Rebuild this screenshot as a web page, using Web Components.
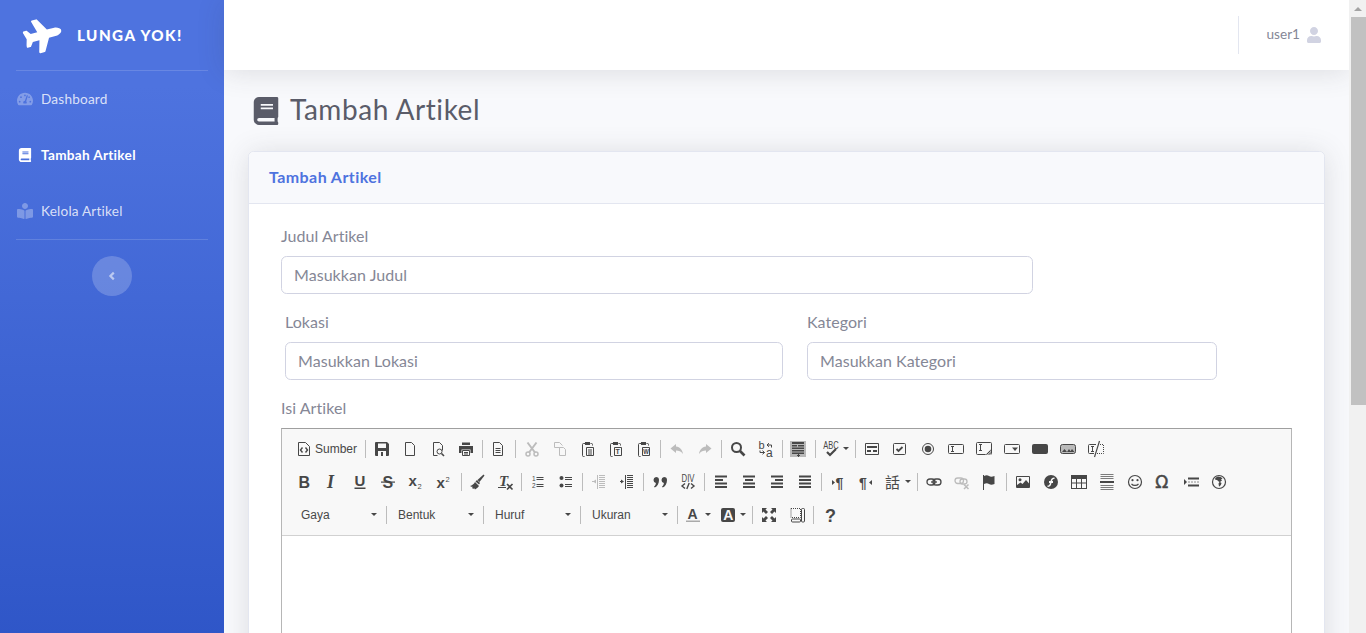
<!DOCTYPE html>
<html lang="id">
<head>
<meta charset="utf-8">
<title>Tambah Artikel</title>
<style>
  html, body { margin: 0; height: 100%; overflow: hidden; background: #f8f9fc; }
  body { font-family: Lato, "Open Sans", sans-serif; }
  #page { display: flex; height: 633px; overflow: hidden; }
  #content { flex: 1; min-width: 0; display: flex; flex-direction: column; }
</style>
</head>
<body>
<div id="page">
  <lunga-sidebar></lunga-sidebar>
  <div id="content">
    <lunga-topbar username="user1"></lunga-topbar>
    <page-body>
      <page-heading>Tambah Artikel</page-heading>
      <form-card heading="Tambah Artikel">
        <form-field label="Judul Artikel" placeholder="Masukkan Judul" style="width:752px"></form-field>
        <form-row>
          <form-field label="Lokasi" placeholder="Masukkan Lokasi"></form-field>
          <form-field label="Kategori" placeholder="Masukkan Kategori"></form-field>
        </form-row>
        <ck-editor label="Isi Artikel"></ck-editor>
      </form-card>
    </page-body>
  </div>
  <fake-scrollbar></fake-scrollbar>
</div>

<script>
const FA = {
  plane: ['0 0 576 512', 'M480 192H365.71L260.61 8.06A16.014 16.014 0 0 0 246.71 0h-65.5c-10.63 0-18.3 10.17-15.38 20.39L214.86 192H112l-43.2-57.6c-3.02-4.03-7.77-6.4-12.8-6.4H16.01C5.6 128-2.04 137.78.49 147.88L32 256 .49 364.12C-2.04 374.22 5.6 384 16.01 384H56c5.04 0 9.78-2.37 12.8-6.4L112 320h102.86l-49.03 171.6c-2.92 10.22 4.75 20.4 15.38 20.4h65.5c5.74 0 11.04-3.08 13.89-8.06L365.71 320H480c35.35 0 96-28.65 96-64s-60.65-64-96-64z'],
  gauge: ['0 0 576 512', 'M288 32C128.94 32 0 160.94 0 320c0 52.8 14.25 102.26 39.06 144.8 5.61 9.62 16.3 15.2 27.44 15.2h443c11.14 0 21.83-5.58 27.44-15.2C561.75 422.26 576 372.8 576 320c0-159.06-128.94-288-288-288zm0 64c14.71 0 26.58 10.13 30.32 23.65-1.11 2.26-2.64 4.23-3.45 6.67l-9.22 27.67c-5.13 3.49-10.97 6.01-17.64 6.01-17.67 0-32-14.33-32-32S270.33 96 288 96zM96 384c-17.67 0-32-14.33-32-32s14.33-32 32-32 32 14.33 32 32-14.33 32-32 32zm48-160c-17.67 0-32-14.33-32-32s14.33-32 32-32 32 14.33 32 32-14.33 32-32 32zm246.77-72.41l-61.33 184C343.13 347.33 352 364.54 352 384c0 11.72-3.38 22.55-8.88 32H232.88c-5.5-9.45-8.88-20.28-8.88-32 0-33.94 26.5-61.43 59.9-63.59l61.34-184.01c4.17-12.56 17.73-19.45 30.36-15.17 12.57 4.19 19.35 17.77 15.17 30.36zm14.66 57.2l15.52-46.55c3.47-1.29 7.13-2.23 11.05-2.23 17.67 0 32 14.33 32 32s-14.33 32-32 32c-11.38-.01-20.89-6.28-26.57-15.22zM480 384c-17.67 0-32-14.33-32-32s14.33-32 32-32 32 14.33 32 32-14.33 32-32 32z'],
  book: ['0 0 448 512', 'M448 360V24c0-13.3-10.7-24-24-24H96C43 0 0 43 0 96v320c0 53 43 96 96 96h328c13.3 0 24-10.7 24-24v-16c0-7.5-3.5-14.3-8.9-18.7-4.2-15.4-4.2-59.3 0-74.7 5.4-4.3 8.9-11.1 8.9-18.6zM128 134c0-3.3 2.7-6 6-6h212c3.3 0 6 2.7 6 6v20c0 3.3-2.7 6-6 6H134c-3.3 0-6-2.7-6-6v-20zm0 64c0-3.3 2.7-6 6-6h212c3.3 0 6 2.7 6 6v20c0 3.3-2.7 6-6 6H134c-3.3 0-6-2.7-6-6v-20zm253.4 250H96c-17.7 0-32-14.3-32-32 0-17.6 14.4-32 32-32h285.4c-1.9 17.1-1.9 46.9 0 64z'],
  reader: ['0 0 512 512', 'M352 96c0-53.02-42.98-96-96-96s-96 42.98-96 96 42.98 96 96 96 96-42.98 96-96zM233.59 241.1c-59.33-36.32-155.43-46.3-203.79-49.05C13.55 191.13 0 203.51 0 219.14v222.8c0 14.33 11.59 26.28 26.49 27.05 43.66 2.29 131.99 10.68 193.04 41.43 9.37 4.72 20.48-1.71 20.48-11.87V252.56c-.01-4.67-2.32-8.95-6.42-11.46zm248.61-49.05c-48.35 2.74-144.46 12.73-203.78 49.05-4.1 2.51-6.41 6.96-6.41 11.63v245.79c0 10.19 11.14 16.63 20.54 11.9 61.04-30.72 149.32-39.11 192.97-41.4 14.9-.78 26.49-12.73 26.49-27.06V219.14c-.01-15.63-13.56-28.01-29.81-27.09z'],
  user: ['0 0 448 512', 'M224 256c70.7 0 128-57.3 128-128S294.7 0 224 0 96 57.3 96 128s57.3 128 128 128zm89.6 32h-16.7c-22.2 10.2-46.9 16-72.9 16s-50.6-5.8-72.9-16h-16.7C60.2 288 0 348.2 0 422.4V464c0 26.5 21.5 48 48 48h352c26.5 0 48-21.5 48-48v-41.6c0-74.2-60.2-134.4-134.4-134.4z']
};
const fa = (name, size, extra = '') =>
  `<svg viewBox="${FA[name][0]}" width="${size}" height="${size}" fill="currentColor" ${extra}><path d="${FA[name][1]}"/></svg>`;

class LungaSidebar extends HTMLElement {
  constructor() {
    super();
    this.attachShadow({mode: 'open'}).innerHTML = `
      <style>
        :host { display: block; flex: 0 0 224px; width: 224px; height: 633px; color: #fff; background: #224abe;
          background-image: linear-gradient(180deg, #4e73df 10%, #224abe 100%); background-size: 100% 865px; background-repeat: no-repeat; }
        .brand { height: 70px; display: flex; align-items: center; padding-left: 24px; box-sizing: border-box; }
        .brand svg { transform: rotate(-15deg); display: block; margin-right: 15px; flex: none; }
        .brand span { font-weight: 900; font-size: 15.2px; letter-spacing: 1.45px; }
        hr { border: 0; border-top: 1px solid rgba(255,255,255,.15); margin: 0 16px; }
        a { display: flex; align-items: center; height: 56px; padding-left: 17px; font-size: 13.6px;
          color: rgba(255,255,255,.8); letter-spacing: .2px; box-sizing: border-box; }
        a .ic { width: 16px; margin-right: 8px; display: flex; justify-content: center; color: rgba(255,255,255,.3); }
        a.on { color: #fff; font-weight: 700; letter-spacing: .3px; }
        a.on .ic { color: #fff; }
        .toggle { width: 40px; height: 40px; border-radius: 50%; background: rgba(255,255,255,.2);
          margin: 16px auto 0; display: flex; align-items: center; justify-content: center; }
      </style>
      <div class="brand">${fa('plane', 38)}<span>LUNGA YOK!</span></div>
      <hr>
      <a><span class="ic">${fa('gauge', 16)}</span>Dashboard</a>
      <a class="on"><span class="ic">${fa('book', 14)}</span>Tambah Artikel</a>
      <a><span class="ic">${fa('reader', 16)}</span>Kelola Artikel</a>
      <hr>
      <div class="toggle"><svg width="10" height="10" viewBox="0 0 10 10"><path d="M6.8 1.6 3.4 5l3.4 3.4" fill="none" stroke="rgba(255,255,255,.55)" stroke-width="2.2"/></svg></div>`;
  }
}
customElements.define('lunga-sidebar', LungaSidebar);

class LungaTopbar extends HTMLElement {
  constructor() {
    super();
    this.attachShadow({mode: 'open'}).innerHTML = `
      <style>
        :host { display: flex; flex: 0 0 70px; height: 70px; background: #fff; align-items: center; justify-content: flex-end;
          box-shadow: 0 2px 28px rgba(58,59,69,.15); position: relative; z-index: 1; }
        .div { width: 1px; height: 38px; background: #e3e6f0; margin-right: 28px; }
        .name { font-size: 13.6px; color: #858796; margin-top: -2px; }
        svg { display: block; margin: 0 27px 0 6px; color: #d1d3e2; }
      </style>
      <div class="div"></div>
      <span class="name">${this.getAttribute('username')}</span>
      ${fa('user', 16)}`;
  }
}
customElements.define('lunga-topbar', LungaTopbar);

class PageBody extends HTMLElement {
  constructor() {
    super();
    this.attachShadow({mode: 'open'}).innerHTML = `
      <style>:host { display: block; flex: 1; min-height: 0; padding: 24px 24px 0; overflow: hidden; background: #f8f9fc; }</style>
      <slot></slot>`;
  }
}
customElements.define('page-body', PageBody);

class PageHeading extends HTMLElement {
  constructor() {
    super();
    this.attachShadow({mode: 'open'}).innerHTML = `
      <style>
        :host { display: flex; align-items: center; height: 33px; margin-bottom: 24px; padding-left: 4px;
          font-size: 28px; color: #5a5c69; letter-spacing: .55px; }
        svg { display: block; margin-right: 10px; }
        span { margin-top: -4px; }
      </style>
      ${fa('book', 28)}<span><slot></slot></span>`;
  }
}
customElements.define('page-heading', PageHeading);

class FormCard extends HTMLElement {
  constructor() {
    super();
    this.attachShadow({mode: 'open'}).innerHTML = `
      <style>
        :host { display: block; background: #fff; border: 1px solid #e3e6f0; border-radius: 5.6px;
          box-shadow: 0 2.4px 28px rgba(58,59,69,.15); height: 600px; box-sizing: border-box; }
        .head { height: 52px; padding: 0 20px 3px; box-sizing: border-box; display: flex; align-items: center; background: #f8f9fc;
          border-bottom: 1px solid #e3e6f0; color: #4e73df; font-weight: 700; font-size: 16px; letter-spacing: .42px;
          border-radius: 5px 5px 0 0; }
        .body { padding: 20px 32px 0; }
      </style>
      <div class="head">${this.getAttribute('heading')}</div>
      <div class="body"><slot></slot></div>`;
  }
}
customElements.define('form-card', FormCard);

class FormField extends HTMLElement {
  constructor() {
    super();
    this.attachShadow({mode: 'open'}).innerHTML = `
      <style>
        :host { display: block; margin-bottom: 16px; }
        label { display: block; font-size: 16px; line-height: 24px; margin-bottom: 8px; color: #858796; letter-spacing: .05px; }
        input { display: block; width: 100%; box-sizing: border-box; height: 38px; padding: 5px 12px 6px; font: inherit; font-size: 16px;
          border: 1px solid #d1d3e2; border-radius: 5.6px; background: #fff; letter-spacing: .05px; outline: 0; }
        input::placeholder { color: #858796; opacity: 1; }
      </style>
      <label>${this.getAttribute('label')}</label>
      <input placeholder="${this.getAttribute('placeholder')}">`;
  }
}
customElements.define('form-field', FormField);

class FormRow extends HTMLElement {
  constructor() {
    super();
    this.attachShadow({mode: 'open'}).innerHTML = `
      <style>:host { display: grid; grid-template-columns: 498px 410px; column-gap: 24px; padding-left: 4px; }</style>
      <slot></slot>`;
  }
}
customElements.define('form-row', FormRow);

class FakeScrollbar extends HTMLElement {
  constructor() {
    super();
    this.attachShadow({mode: 'open'}).innerHTML = `
      <style>
        :host { display: flex; flex-direction: column; flex: 0 0 17px; width: 17px; height: 633px; background: #f1f1f1; position: relative; z-index: 2; }
        .up { height: 17px; display: flex; align-items: center; justify-content: center; }
        .up i { width: 0; height: 0; border: 4px solid transparent; border-top: 0; border-bottom: 4px solid #a3a3a3; }
        .thumb { height: 388px; background: #c1c1c1; margin: 0 0 0 2px; width: 15px; }
      </style>
      <div class="up"><i></i></div><div class="thumb"></div>`;
  }
}
customElements.define('fake-scrollbar', FakeScrollbar);

/* toolbar icons, all on a 16 grid */
const S = 'fill="none" stroke="currentColor"';
// css in style= wins over the defaults, so weight and family can be changed per icon
const txt = (x, y, size, str, css = '', opt = '') =>
  `<text x="${x}" y="${y}" font-size="${size}" fill="currentColor" font-family="Liberation Sans, sans-serif" font-weight="bold" style="${css}" ${opt}>${str}</text>`;
const NORMAL = 'font-weight:normal';
const clip = `<path d="M5.5 2.5H3.5a1 1 0 0 0-1 1v11a1 1 0 0 0 1 1h1" ${S}/><path d="M10.5 2.5h1a1 1 0 0 1 1 1v1" ${S}/><path d="M5 1h5v3H5z"/>`;
const ICONS = {
  source: `<path d="M2.5 1.5h7l4 4v9h-11z" ${S}/><path d="M6.5 6.5 4.5 9l2 2.5M9.5 6.5l2 2.5-2 2.5" ${S} stroke-width="1.4"/>`,
  save: `<path fill-rule="evenodd" d="M2 1h11l2 2v11a1 1 0 0 1-1 1H2a1 1 0 0 1-1-1V2a1 1 0 0 1 1-1zM4 2.5V7h8V2.5zM4 10v5h8v-5z"/><path d="M7 11h2v4H7z"/>`,
  newpage: `<path d="M3.5 1.5h6l3 3v10h-9z" ${S}/>`,
  preview: `<path d="M3.5 14.5v-13h6l3 3v5M3.5 14.5h4" ${S}/><circle cx="9.5" cy="10.5" r="2.5" ${S}/><path d="m11.5 12.5 2.5 2.5" ${S} stroke-width="1.6"/>`,
  print: `<path d="M4 1.5h8V4H4zM1 5h14v7h-2.5V8.5h-9V12H1z"/><path d="M4.5 9.5h7v5h-7z" ${S}/><path d="M6 11.5h4M6 13h4" ${S}/>`,
  templates: `<path d="M3.5 1.5h6l3 3v10h-9z" ${S}/><path d="M5.5 7.5h5M5.5 9.5h5M5.5 11.5h5" ${S}/>`,
  cut: `<circle cx="4" cy="13" r="2" ${S} stroke-width="1.5"/><circle cx="12" cy="13" r="2" ${S} stroke-width="1.5"/><path d="M3.5 1.5 11 11.5M12.5 1.5 5 11.5" ${S} stroke-width="2"/>`,
  copy: `<path d="M7.5 8.5v-2h-5v-5h5l3 3M7.5 6.5h4l2 2v6h-6z" ${S}/>`,
  paste: `${clip}<path d="M6.5 6.5h7v8h-7z" ${S}/><path d="M8 9h4M8 11h4M8 13h4" ${S}/>`,
  pastetext: `${clip}<path d="M6.5 6.5h7v8h-7z" ${S}/>${txt(7.6, 13.4, 7, 'T')}`,
  pasteword: `${clip}<path d="M6.5 6.5h7v8h-7z" ${S}/>${txt(7.2, 13.2, 6.5, 'W', '', 'textLength="5.6" lengthAdjust="spacingAndGlyphs"')}`,
  undo: `<path d="M7 3 1.5 7.5 7 12V9.5c3 0 5 .8 7 3.5-.5-4-3-7-7-7.5z"/>`,
  redo: `<path d="M9 3l5.5 4.5L9 12V9.5c-3 0-5 .8-7 3.5.5-4 3-7 7-7.5z"/>`,
  find: `<circle cx="6.5" cy="6.5" r="4.5" ${S} stroke-width="2"/><path d="m10 10 4.5 4.5" ${S} stroke-width="2.6"/>`,
  replace: `${txt(.5, 8, 11, 'b', NORMAL)}${txt(8, 15.5, 12, 'a', NORMAL)}<path d="M9 4h4.5v2.500M9 4l2-1.800M9 4l2 1.800M6.500 11.500H2V9.500M6.500 11.500l-2-1.800M6.500 11.500l-2 1.800" ${S}/>`,
  selectall: `<path d="M0 0h16v16H0z" fill="#b9b9b9"/><path d="M2 1h12v2H2zM2 4h5v1.500H2zM8 4h6v1.500H8zM2 6.500h12V8H2zM2 9h12v1.500H2zM2 11.500h12V13H2z"/><path d="M7 14.500h3M8.500 13v3" ${S}/>`,
  spell: `${txt(.3, 7.8, 10.5, 'ABC', NORMAL, 'textLength="15.4" lengthAdjust="spacingAndGlyphs"')}<path d="m4 11 3 3 6-6" ${S} stroke-width="2.2"/>`,
  form: `<path d="M1.5 2.5h13v11h-13z" ${S}/><path d="M3 5h10v2H3zM3 9h4v2H3zM9 9h4v2H9z"/>`,
  checkbox: `<rect x="1.5" y="2.5" width="12" height="11" rx="1" ${S}/><path d="m4.5 8 2 2 4-4" ${S} stroke-width="1.8"/>`,
  radio: `<circle cx="8" cy="8" r="5.5" ${S}/><circle cx="8" cy="8" r="3.3"/>`,
  textfield: `<rect x=".5" y="3.5" width="15" height="9" rx="1" ${S}/><path d="M3 5.5h3M4.5 5.5v5M3 10.5h3" ${S}/>`,
  textarea: `<rect x=".5" y="1.5" width="15" height="12" rx="1" ${S}/><path d="M3 3.5h3M4.5 3.5v6M3 9.5h3" ${S}/><path d="M15 8v6H9z" fill="#bbb"/><path d="m10.5 13.5 4-4M13 13.5l2-2" ${S}/>`,
  select: `<rect x=".5" y="3.5" width="15" height="9" rx="1" ${S}/><path d="M8 6.5h6L11 10z"/>`,
  button: `<rect x="0" y="3" width="16" height="10" rx="2"/>`,
  imagebutton: `<rect x=".5" y="3.5" width="15" height="9" rx="2" fill="#bbb" stroke="currentColor"/><path d="M2 11l2.5-3L7 11M7 11l2-3 2 3M10 11l2-3 2.5 3z"/>`,
  hiddenfield: `<path d="M8 3.5H1.5a1 1 0 0 0-1 1v7a1 1 0 0 0 1 1H6" ${S}/><path d="M3 5.5h3M4.5 5.5v5M3 10.5h3" ${S}/><path d="m11.5 0-5 16" ${S} stroke-width="1.2"/><path d="M10 3.5h5.5v9H9" ${S} stroke-dasharray="1 1"/>`,
  bold: txt(2.5, 13.5, 16, 'B'),
  italic: `<text x="3" y="14" font-size="18" fill="currentColor" font-family="Liberation Serif, serif" font-weight="bold" font-style="italic">I</text>`,
  underline: `${txt(2.6, 11.5, 15, 'U')}<path d="M2.5 13.5h11V15h-11z"/>`,
  strike: `${txt(2.5, 13.5, 16, 'S')}<path d="M1 7.5h14v1.2H1z"/>`,
  subscript: `${txt(.5, 12, 15, 'x')}${txt(9.5, 15, 7.5, '2', NORMAL)}`,
  superscript: `${txt(.5, 14, 15, 'x')}${txt(9.5, 7.5, 7.5, '2', NORMAL)}`,
  brush: `<path d="M14.5 .5l1 1-5 6.5-2-2z"/><path d="M8 6l3 3-1 1.5-3.5-3z"/><path d="M6 8l4 4c-1 1.5-2.5 2.5-4 3.5l-1-1.5-.5 1-1.5-1 1-1.5-1 .5L1 12c2-.5 4-2 5-4z"/>`,
  removeformat: `<text x="2" y="11.5" font-size="15" fill="currentColor" font-family="Liberation Serif, serif" font-weight="bold" font-style="italic">T</text><path d="M1 13h8v1H1z"/><path d="m10 10 5.5 5.5M15.5 10 10 15.5" ${S} stroke-width="1.6"/>`,
  numlist: `${txt(2, 6.5, 6.5, '1', NORMAL)}${txt(2, 13.5, 6.5, '2', NORMAL)}<path d="M6.5 3.5h7M6.5 5.5h7M6.5 10.5h7M6.5 12.5h7" ${S}/>`,
  bulletedlist: `<circle cx="3.5" cy="4" r="2"/><circle cx="3.5" cy="11.5" r="2"/><path d="M7 3.5h7M7 5.5h7M7 10.5h7M7 12.5h7" ${S}/>`,
  outdent: `<path d="M8 1.5h6M8 3.5h6M8 5.5h6M8 7.5h6M8 9.5h6M8 11.5h6M8 13.5h6M6.5 1v14" ${S}/><path d="M5 5.5v4L2 7.5z"/><path d="M1 7.5h2" ${S}/>`,
  indent: `<path d="M8 1.5h6M8 3.5h6M8 5.5h6M8 7.5h6M8 9.5h6M8 11.5h6M8 13.5h6M6.5 1v14" ${S}/><path d="M2 5.5v4l3-2z"/><path d="M1 7.5h2" ${S}/>`,
  blockquote: `<path d="M4 3a3 3 0 0 1 3 3c0 3.5-1.7 6.5-4.3 7.5l-.7-1c1-.7 1.7-2 1.900-3.600A3 3 0 0 1 4 3z"/><path d="M12 3a3 3 0 0 1 3 3c0 3.5-1.7 6.5-4.3 7.5l-.7-1c1-.7 1.7-2 1.900-3.600A3 3 0 0 1 12 3z"/>`,
  div: `${txt(1.5, 8.2, 10.5, 'DIV', NORMAL, 'textLength="13" lengthAdjust="spacingAndGlyphs"')}<path d="M5 9.5 2 12l3 2.5M11 9.5l3 2.5-3 2.5M9.2 9 6.8 15" ${S} stroke-width="1.4"/>`,
  left: `<path d="M2 2h12v2H2zM2 5.5h8v2H2zM2 9h12v2H2zM2 12.5h12v2H2z" transform="translate(0 -.5)"/>`,
  center: `<path d="M2 2h12v2H2zM4 5.5h8v2H4zM2 9h12v2H2zM2 12.5h12v2H2z" transform="translate(0 -.5)"/>`,
  right: `<path d="M2 2h12v2H2zM6 5.5h8v2H6zM2 9h12v2H2zM2 12.5h12v2H2z" transform="translate(0 -.5)"/>`,
  justify: `<path d="M2 1.5h12v2H2zM2 5h12v2H2zM2 8.5h12v2H2zM2 12h12v2H2z"/>`,
  ltr: `<path d="M2 6v5l3-2.5z"/>${txt(5.5, 13.5, 14, '¶')}`,
  rtl: `${txt(1, 13.5, 14, '¶')}<path d="M14 6v5l-3-2.5z"/>`,
  language: `<text x="0" y="13.5" font-size="15" fill="currentColor" font-family="Noto Sans CJK TC, sans-serif">話</text>`,
  link: `<rect x="1" y="5" width="8" height="6" rx="3" ${S} stroke-width="1.3"/><rect x="7" y="5" width="8" height="6" rx="3" ${S} stroke-width="1.3"/><path d="M5 8h6" ${S} stroke-width="1.3"/>`,
  unlink: `<rect x="1" y="4" width="8.5" height="5.5" rx="2.7" ${S} stroke-width="1.3"/><rect x="6" y="5" width="7" height="5" rx="2.5" ${S} stroke-width="1.3"/><path d="m10 10.5 4.5 4.5M14.5 10.5 10 15" ${S} stroke-width="1.5"/>`,
  anchor: `<path d="M1.5 1v15" ${S}/><path d="M2 2c2-1 3.5-1 5 0s3 1 5.5 0v8c-2.5 1-4 1-5.5 0s-3-1-5 0z"/>`,
  image: `<path d="M1.5 2.5h13v11h-13z" ${S}/><circle cx="5" cy="5.8" r="1.5"/><path d="M2 13v-2l3.5-2.5 2 1.5 3.5-4 3.5 4V13z"/>`,
  flash: `<circle cx="8" cy="8" r="7"/><path d="M11.5 3.5C9 3.5 8 5 7.5 7H6v2h1c-.5 2-1 2.5-2.5 2.5V13c2.5 0 3.5-1.5 4-4h1.500V7H9c.5-1.5 1-2 2.5-2z" fill="#f8f8f8"/>`,
  table: `<path fill-rule="evenodd" d="M0 1h16v14H0zM1 5v3.5h4V5zm5 0v3.5h4V5zm5 0v3.5h4V5zM1 9.5V14h4V9.5zm5 0V14h4V9.5zm5 0V14h4V9.5z"/>`,
  hr: `<path d="M1.5 .5h13M1.5 2.5h13M1.5 4.5h13M1.5 11.5h13M1.5 13.5h13M1.5 15.5h13" ${S} opacity=".7"/><path d="M1 7h14v2H1z"/>`,
  smiley: `<circle cx="8" cy="8" r="6.5" ${S} stroke-width="1.2"/><circle cx="5.5" cy="6.2" r="1.1"/><circle cx="10.5" cy="6.2" r="1.1"/><path d="M4.5 9.8c1.5 2.2 5.5 2.2 7 0" ${S} stroke-width="1.2"/>`,
  omega: txt(.2, 14, 17, 'Ω', 'font-family:DejaVu Sans,sans-serif;font-weight:normal', 'stroke="currentColor" stroke-width=".5"'),
  pagebreak: `<path d="M1 5v6l3-3z"/><path d="M5 3.5h11v2H5zM5 10.5h11v2H5z"/><path d="M5 8h11" ${S} stroke-dasharray="2 1" opacity=".6"/>`,
  iframe: `<circle cx="8" cy="8" r="6.5" ${S} stroke-width="1.2"/><path d="M7 2.500C5.500 3 4 3.700 4 5.500c1 .5 2.500 0 3 1.500l1.500 1-1 1.500.5 3c1 0 2-1.500 2.500-3.500L9 8l2-1.500-1-1 1.500-1C10.500 3.200 9 2.700 7 2.500z"/>`,
  textcolor: `${txt(2.6, 11.5, 14, 'A')}<path d="M1 13.5h14V15H1z" fill="#aaa"/>`,
  bgcolor: `<rect x="1" y="1" width="14" height="14" rx="2"/>${txt(3.2, 12.8, 14, 'A', 'fill:#f8f8f8')}`,
  maximize: `<path d="M1 1h5L4.500 2.500 7 5 5 7 2.500 4.500 1 6zM15 1v5l-1.500-1.500L11 7 9 5l2.500-2.500L10 1zM1 15v-5l1.500 1.500L5 9l2 2-2.500 2.500L6 15zM15 15h-5l1.500-1.500L9 11l2-2 2.500 2.500L15 10z"/>`,
  showblocks: `<path d="M2 1.5h9.5v9H2z" ${S} stroke-dasharray="1 1"/><rect x="2.5" y="12" width="9" height="3" rx="1" ${S}/><rect x="12.5" y="1.5" width="3" height="13.5" rx="1" ${S}/>`,
  about: txt(3, 14.5, 18, '?')
};

// [icon, opts] = a button, 'ml:mr' = a separator with its side margins
const ROW1 = [
  ['source', {label: 'Sumber', w: 72}], '3:2',
  ['save'], ['newpage'], ['preview'], ['print'], '2:1',
  ['templates'], '3:2',
  ['cut', {off: 1}], ['copy', {off: 1}], ['paste'], ['pastetext'], ['pasteword'], '2:2',
  ['undo', {off: 1}], ['redo', {off: 1}], '2:2',
  ['find'], ['replace'], '2:1',
  ['selectall'], '3:1',
  ['spell', {arrow: 1, w: 36}], '2:2',
  ['form'], ['checkbox'], ['radio'], ['textfield'], ['textarea'], ['select'], ['button'], ['imagebutton'], ['hiddenfield']
];
const ROW2 = [
  ['bold'], ['italic'], ['underline'], ['strike'], ['subscript'], ['superscript'], '3:1',
  ['brush'], ['removeformat'], '2:2',
  ['numlist'], ['bulletedlist'], '2:2',
  ['outdent', {off: 1}], ['indent'], '2:2',
  ['blockquote'], ['div'], '2:2',
  ['left'], ['center'], ['right'], ['justify'], '2:2',
  ['ltr'], ['rtl'],
  ['language', {arrow: 1, w: 35, pad: 5}], '2:2',
  ['link'], ['unlink', {off: 1}], ['anchor'], '2:2',
  ['image'], ['flash'], ['table'], ['hr'], ['smiley'], ['omega'], ['pagebreak'], ['iframe']
];
const ROW3 = [
  {combo: 'Gaya'}, '0:0', {combo: 'Bentuk'}, '0:0', {combo: 'Huruf'}, '0:0', {combo: 'Ukuran'}, '0:1',
  ['textcolor', {arrow: 1, w: 35}], ['bgcolor', {arrow: 1, w: 36}], '2:2',
  ['maximize'], ['showblocks'], '2:2',
  ['about']
];

function renderItem(item) {
  if (typeof item === 'string') {
    const [ml, mr] = item.split(':');
    return `<i class="sep" style="margin:0 ${mr}px 0 ${ml}px"></i>`;
  }
  if (item.combo) {
    return `<span class="combo"><span>${item.combo}</span><b class="arr"></b></span>`;
  }
  const [name, o = {}] = item;
  return `<span class="btn${o.off ? ' off' : ''}" style="width:${o.w || 28}px;padding-left:${o.pad || 6}px">
    <svg viewBox="0 0 16 16" width="16" height="16" fill="currentColor">${ICONS[name]}</svg>${o.label ? `<em>${o.label}</em>` : ''}${o.arrow ? '<b class="arr"></b>' : ''}</span>`;
}

class CkEditor extends HTMLElement {
  constructor() {
    super();
    const rows = [ROW1, ROW2, ROW3].map(r => `<div class="row">${r.map(renderItem).join('')}</div>`).join('');
    this.attachShadow({mode: 'open'}).innerHTML = `
      <style>
        :host { display: block; }
        label { display: block; font-size: 16px; line-height: 24px; margin-bottom: 8px; color: #858796; letter-spacing: .05px; }
        .box { border: 1px solid #d1d1d1; border-top-color: #9f9f9f; border-left-color: #b6b6b6; border-right-color: #b6b6b6; width: 1011px; box-sizing: border-box; height: 400px; background: #fff; }
        .tools { height: 107px; box-sizing: border-box; padding: 3px 0 4px 8px; background: #f8f8f8; border-bottom: 1px solid #d1d1d1; font: 12px "Liberation Sans", Arial, sans-serif; color: #484848; }
        .row { display: flex; align-items: center; height: 33px; }
        .btn { display: flex; align-items: center; box-sizing: border-box; height: 28px; color: #474747; flex: none; }
        .btn svg { display: block; flex: none; overflow: visible; }
        .btn.off { color: #bcbcbc; }
        em { font-style: normal; margin-left: 3px; }
        .arr { width: 0; height: 0; border: 3px solid transparent; border-top: 3px solid #474747; border-bottom: 0; margin-left: 4px; flex: none; }
        .sep { display: block; width: 1px; height: 18px; background: #bcbcbc; flex: none; }
        .combo { display: flex; align-items: center; width: 96px; box-sizing: border-box; padding-left: 11px; flex: none; }
        .combo span { width: 70px; }
        .combo .arr { margin-left: 0; }
      </style>
      <label>${this.getAttribute('label')}</label>
      <div class="box"><div class="tools">${rows}</div></div>`;
  }
}
customElements.define('ck-editor', CkEditor);
</script>
</body>
</html>
